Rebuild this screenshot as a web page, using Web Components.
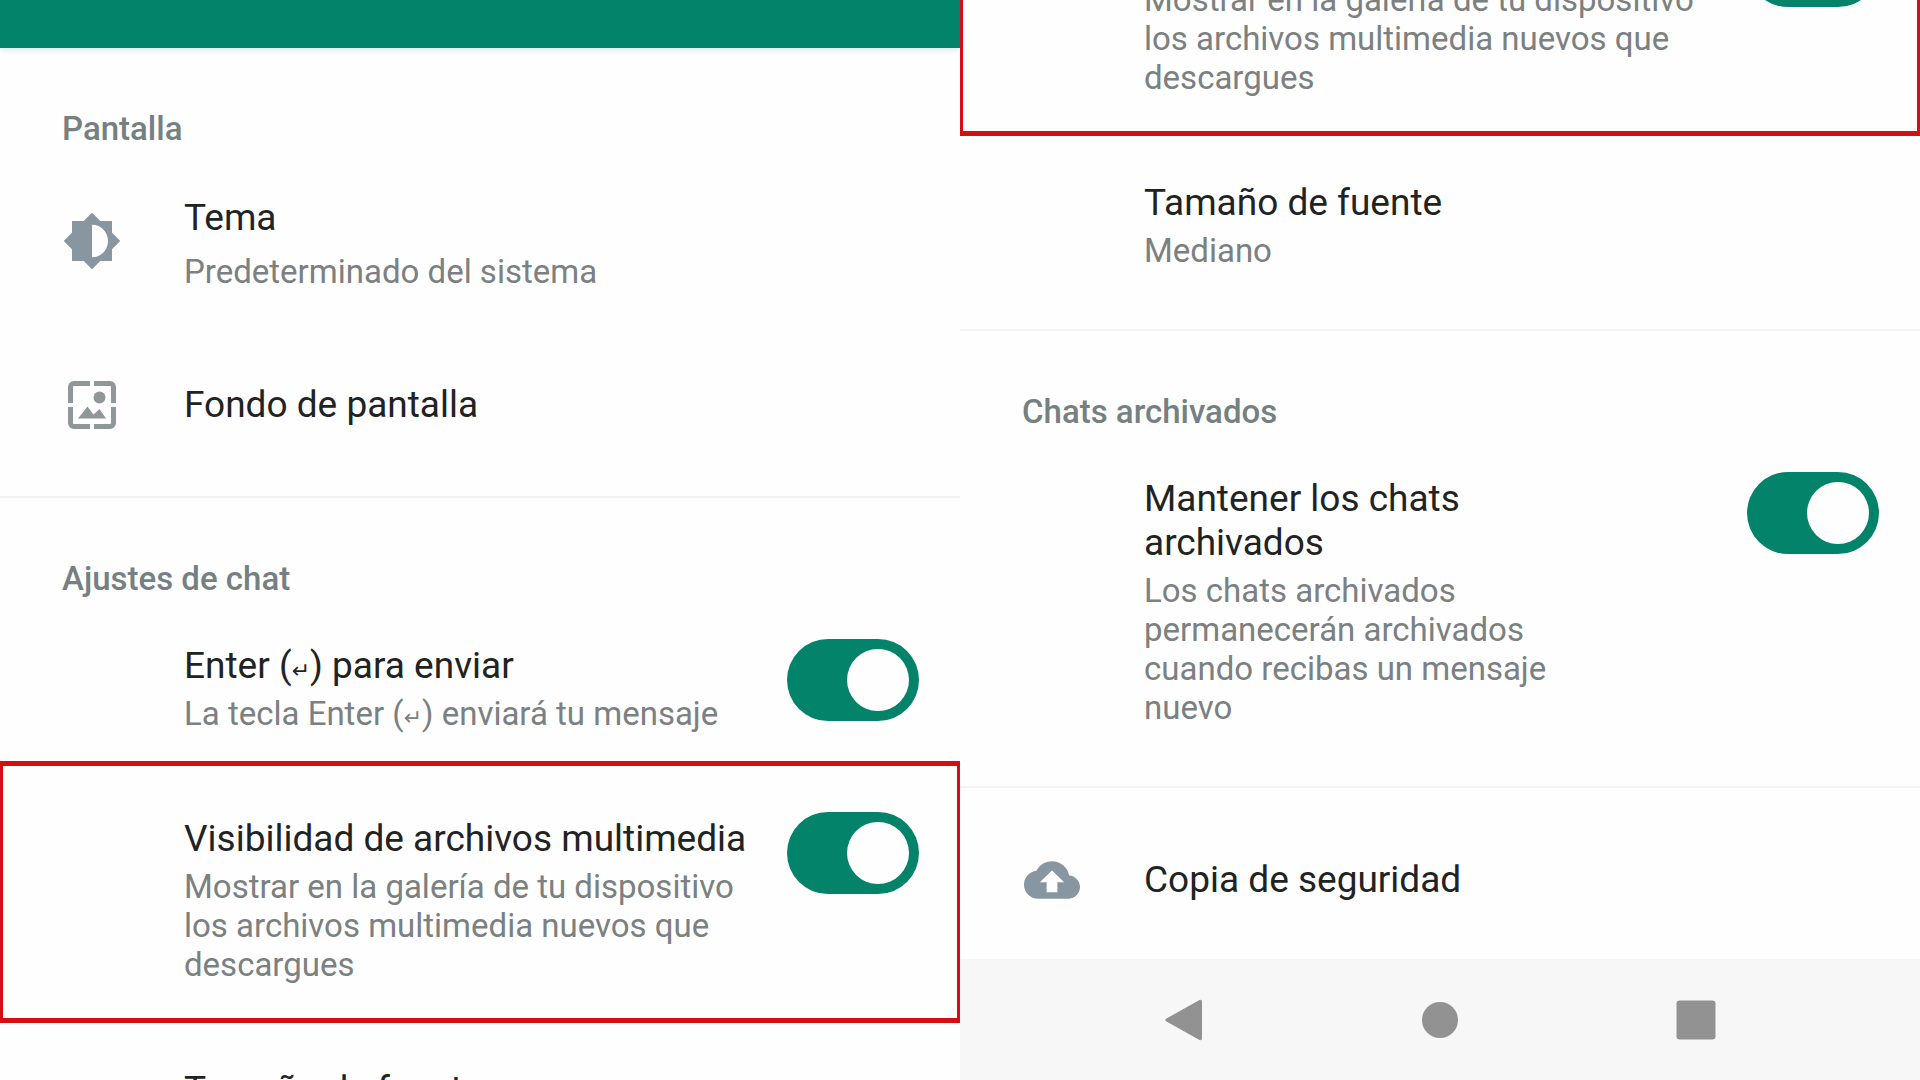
<!DOCTYPE html>
<html lang="es">
<head>
<meta charset="utf-8">
<meta name="viewport" content="width=device-width, initial-scale=1">
<title>Chats</title>
<style>
  body {
    margin: 0;
    font-family: Roboto, "Liberation Sans", sans-serif;
    background: #fefefe;
  }

  main {
    display: grid;
    grid-template-columns: 1fr 1fr;
    height: 100vh;
    overflow: hidden;
  }

  .key {
    font-family: "DejaVu Sans", sans-serif;
    font-size: 22px;
    line-height: 1;
  }
</style>
</head>
<body>

<template id="icon-theme">
  <svg viewBox="0 0 24 24" width="60" height="60" fill="#8796a0">
    <path d="M20 8.690V4h-4.690L12 .690 8.690 4H4v4.690L.690 12 4 15.310V20h4.690L12 23.310 15.310 20H20v-4.690L23.310 12 20 8.690zM12 18.500V5.500c3.700 0 6.400 2.900 6.400 6.500s-2.700 6.500-6.400 6.500z"/>
  </svg>
</template>

<template id="icon-wallpaper">
  <svg viewBox="0 0 48 48" width="48" height="48" fill="#8f9798">
    <path d="M2.500 22V6a3.500 3.500 0 0 1 3.500-3.500H22M26 2.500h16A3.500 3.500 0 0 1 45.500 6v16M45.500 26v16a3.500 3.500 0 0 1-3.500 3.500H26M22 45.500H6A3.500 3.500 0 0 1 2.500 42V26" fill="none" stroke="#8f9798" stroke-width="5"/>
    <circle cx="31.500" cy="16.500" r="6"/>
    <path d="M10 37.500l9.500-12 6 8 6-5.500 6.500 9.500z"/>
  </svg>
</template>

<template id="icon-backup">
  <svg viewBox="0 0 24 24" width="56" height="56" fill="#8796a0">
    <path d="M19.350 10.040A7.490 7.490 0 0 0 12 4C9.110 4 6.600 5.640 5.350 8.040A5.994 5.994 0 0 0 0 14c0 3.310 2.690 6 6 6h13c2.760 0 5-2.240 5-5 0-2.640-2.050-4.780-4.650-4.960zM14.300 13v4.300h-4.600V13H6.800L12 7.900l5.200 5.100z"/>
  </svg>
</template>

<template id="toggle-switch">
  <style>
    :host {
      display: block;
      flex: none;
    }

    input {
      appearance: none;
      display: flex;
      justify-content: flex-start;
      align-items: center;
      box-sizing: border-box;
      width: 132px;
      height: 82px;
      margin: 0;
      padding: 0 10px;
      border-radius: 41px;
      background: #b4babd;
      cursor: pointer;
    }

    input::before {
      content: "";
      width: 62px;
      height: 62px;
      border-radius: 50%;
      background: #fefefe;
    }

    input:checked {
      justify-content: flex-end;
      background: #02836a;
    }
  </style>
  <input type="checkbox" role="switch">
</template>

<template id="settings-section">
  <style>
    :host {
      display: block;
      flex: none;
      padding-bottom: 17px;
    }

    :host([divided]) {
      border-bottom: 2px solid #f2f3f3;
    }

    :host(:not([heading])) {
      padding-top: 16px;
    }

    :host(:not([heading])) h2 {
      display: none;
    }

    h2 {
      margin: 0;
      padding: 61px 62px 4px;
      font-size: 33px;
      font-weight: 500;
      line-height: 39px;
      color: #748081;
    }
  </style>
  <h2></h2>
  <slot></slot>
</template>

<template id="settings-row">
  <style>
    :host {
      display: block;
      position: relative;
    }

    .row {
      display: flex;
      align-items: flex-start;
      box-sizing: border-box;
      width: 100%;
      margin: 0;
      padding: 37px 41px 42px 62px;
      border: 0;
      background: none;
      font: inherit;
      text-align: left;
      cursor: pointer;
    }

    .icon {
      display: flex;
      flex: none;
      justify-content: center;
      align-items: center;
      align-self: center;
      width: 60px;
      height: 48px;
      margin-right: 62px;
    }

    .icon svg {
      flex: none;
    }

    .text {
      flex: 1;
      min-width: 0;
      padding-top: 5px;
      padding-right: var(--text-end, 20px);
    }

    .title,
    .detail {
      display: block;
    }

    .title {
      font-size: 37px;
      line-height: 44px;
      color: #212323;
    }

    .detail {
      margin-top: 6px;
      font-size: 33px;
      line-height: 39px;
      color: #7b8081;
    }

    :host([single]) .row {
      align-items: center;
      padding-top: 52px;
      padding-bottom: var(--row-end, 50px);
    }

    :host([single]) .text {
      padding-top: 0;
    }

    :host([roomy]) .row {
      padding-top: 39px;
      padding-bottom: 38px;
    }

    :host([roomy]) .detail {
      margin-top: 12px;
    }

    /* frame laid over the row, it reaches into the row above */
    :host([highlighted])::after {
      content: "";
      position: absolute;
      inset: -14px 0 3px;
      border: solid #d40f14;
      border-width: 5px 3px;
      pointer-events: none;
    }
  </style>
  <slot name="shell"></slot>
</template>

<template id="nav-bar">
  <style>
    :host {
      display: grid;
      flex: none;
      grid-template-columns: repeat(3, 1fr);
      padding: 0 10%;
      background: #f7f7f7;
    }

    button {
      display: flex;
      justify-content: center;
      align-items: center;
      height: 121px;
      padding: 0;
      border: 0;
      background: none;
      cursor: pointer;
    }

    svg {
      fill: #929292;
    }
  </style>
  <button type="button" aria-label="Atrás">
    <svg viewBox="0 0 40 42" width="40" height="42"><path d="M2.500 19.500L35 1.200q3-1.200 3 1.500v36.600q0 2.700-3 1.500L2.500 22.500q-2.500-1.500 0-3z"/></svg>
  </button>
  <button type="button" aria-label="Inicio">
    <svg viewBox="0 0 40 40" width="40" height="40"><circle cx="20" cy="20" r="18"/></svg>
  </button>
  <button type="button" aria-label="Recientes">
    <svg viewBox="0 0 40 40" width="40" height="40"><rect x="0.500" y="0.500" width="39" height="39" rx="3"/></svg>
  </button>
</template>

<template id="settings-panel">
  <style>
    :host {
      display: flex;
      flex-direction: column;
      min-width: 0;
      min-height: 0;
      overflow: hidden;
    }

    :host([scrolled]) {
      justify-content: flex-end;
    }

    header {
      display: none;
      flex: none;
      height: 48px;
      background: #02836a;
      box-shadow: 0 2px 6px #d5ecec;
    }

    :host([bar]) header {
      display: block;
    }
  </style>
  <header></header>
  <slot></slot>
</template>

<main>
  <settings-panel bar>
    <settings-section heading="Pantalla" divided>
      <settings-row icon="theme" roomy>Tema<span slot="detail">Predeterminado del sistema</span></settings-row>
      <settings-row icon="wallpaper" single>Fondo de pantalla</settings-row>
    </settings-section>
    <settings-section heading="Ajustes de chat">
      <settings-row toggle>Enter (<span class="key">↵</span>) para enviar<span slot="detail">La tecla Enter (<span class="key">↵</span>) enviará tu mensaje</span></settings-row>
      <settings-row toggle highlighted>Visibilidad de archivos multimedia<span slot="detail">Mostrar en la galería de tu dispositivo los archivos multimedia nuevos que descargues</span></settings-row>
      <settings-row>Tamaño de fuente</settings-row>
    </settings-section>
  </settings-panel>

  <settings-panel scrolled>
    <settings-section divided>
      <settings-row toggle highlighted>Visibilidad de archivos multimedia<span slot="detail">Mostrar en la galería de tu dispositivo los archivos multimedia nuevos que descargues</span></settings-row>
      <settings-row>Tamaño de fuente<span slot="detail">Mediano</span></settings-row>
    </settings-section>
    <settings-section heading="Chats archivados" divided>
      <settings-row toggle style="--text-end: 130px">Mantener los chats archivados<span slot="detail">Los chats archivados permanecerán archivados cuando recibas un mensaje nuevo</span></settings-row>
    </settings-section>
    <settings-section>
      <settings-row icon="backup" single style="--row-end: 38px">Copia de seguridad</settings-row>
    </settings-section>
    <nav-bar></nav-bar>
  </settings-panel>
</main>

<script>
  const clone = id => document.getElementById(id).content.cloneNode(true);

  class TemplateElement extends HTMLElement {
    constructor() {
      super();
      this.attachShadow({ mode: "open" });
      this.shadowRoot.appendChild(clone(this.localName));
    }
  }

  customElements.define("settings-panel", class extends TemplateElement {});
  customElements.define("nav-bar", class extends TemplateElement {});
  customElements.define("toggle-switch", class extends TemplateElement {
    connectedCallback() {
      const input = this.shadowRoot.querySelector("input");
      input.checked = this.hasAttribute("checked");
      input.setAttribute("aria-label", this.getAttribute("label") || "");
    }
  });

  customElements.define("settings-section", class extends TemplateElement {
    connectedCallback() {
      this.shadowRoot.querySelector("h2").textContent = this.getAttribute("heading") || "";
    }
  });

  customElements.define("settings-row", class extends TemplateElement {
    connectedCallback() {
      // rows with a switch are plain boxes, all the others can be pressed
      const toggle = this.hasAttribute("toggle");
      const row = document.createElement(toggle ? "div" : "button");
      row.className = "row";
      row.innerHTML = `
        <span class="icon"></span>
        <span class="text">
          <span class="title"><slot></slot></span>
        </span>
      `;

      if (this.querySelector("[slot=detail]")) {
        const detail = document.createElement("span");
        detail.className = "detail";
        detail.innerHTML = `<slot name="detail"></slot>`;
        row.querySelector(".text").appendChild(detail);
      }

      if (this.hasAttribute("icon")) {
        row.querySelector(".icon").appendChild(clone("icon-" + this.getAttribute("icon")));
      }

      if (toggle) {
        const title = [...this.childNodes].filter(node => node.slot !== "detail");
        const sw = document.createElement("toggle-switch");
        sw.setAttribute("checked", "");
        sw.setAttribute("label", title.map(node => node.textContent).join(""));
        row.appendChild(sw);
      }

      this.shadowRoot.querySelector("slot[name=shell]").replaceWith(row);
    }
  });
</script>
</body>
</html>
